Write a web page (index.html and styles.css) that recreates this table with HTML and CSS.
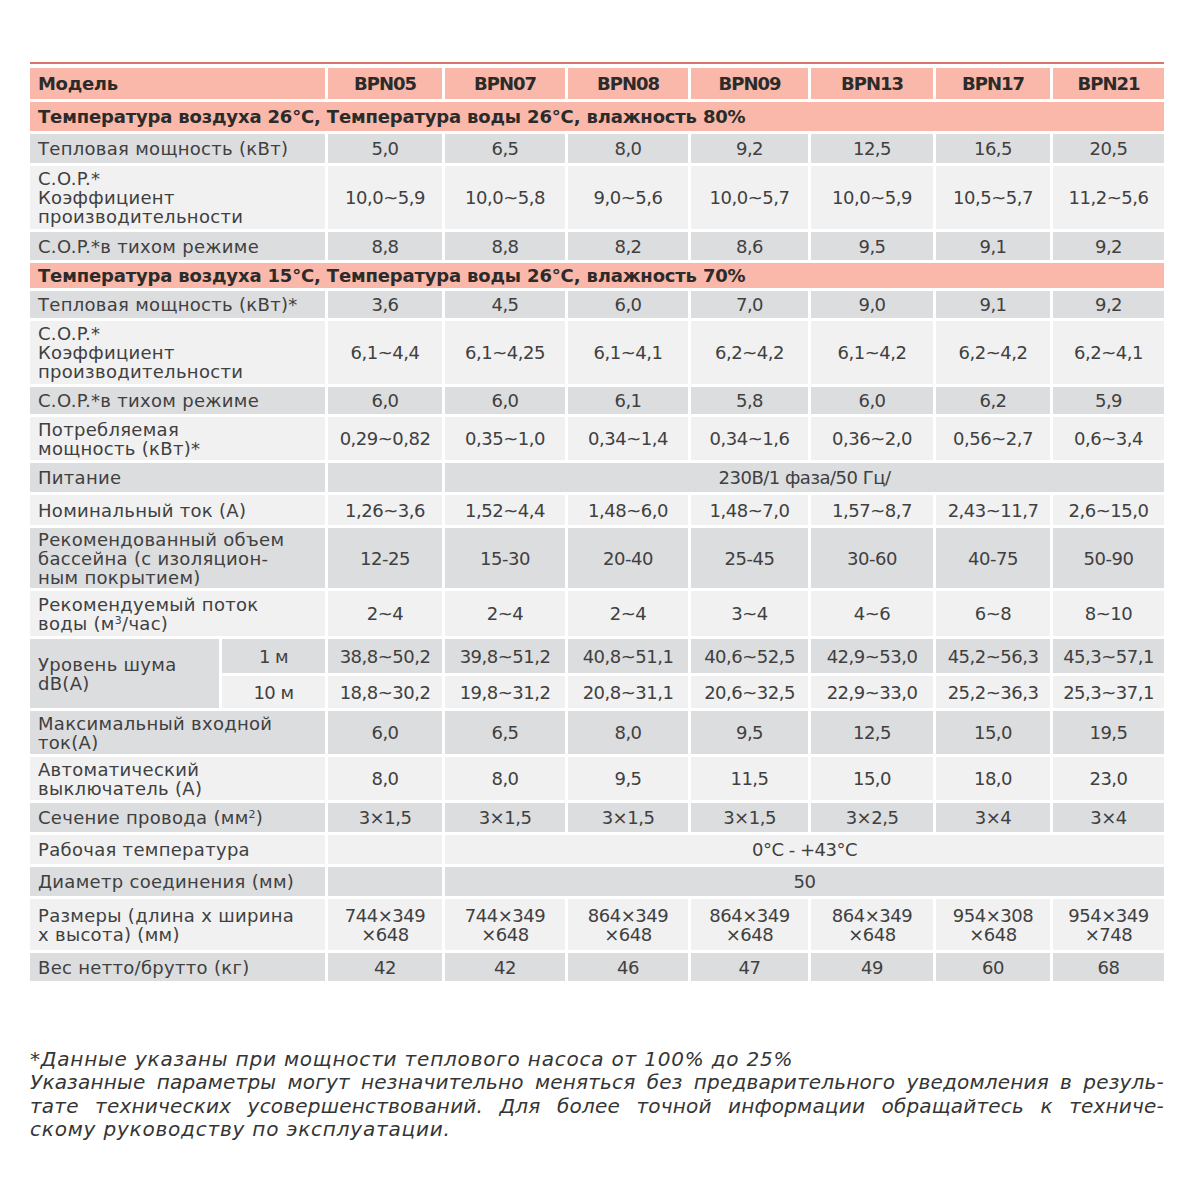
FILE: index.html
```html
<!DOCTYPE html>
<html lang="ru">
<head>
<meta charset="utf-8">
<title>BPN</title>
<link rel="stylesheet" href="styles.css">
</head>
<body>
<div class="page">
  <div class="topline"></div>
  <table class="spec">
    <colgroup>
      <col class="c-la"><col class="c-lb">
      <col class="c05"><col class="c07"><col class="c08"><col class="c09"><col class="c13"><col class="c17"><col class="c21">
    </colgroup>
    <tr class="head h31">
      <td colspan="2" class="lbl">Модель</td>
      <td>BPN05</td><td>BPN07</td><td>BPN08</td><td>BPN09</td><td>BPN13</td><td>BPN17</td><td>BPN21</td>
    </tr>
    <tr class="sec h29">
      <td colspan="9" class="lbl">Температура воздуха 26°C, Температура воды 26°C, влажность 80%</td>
    </tr>
    <tr class="g h29">
      <td colspan="2" class="lbl">Тепловая мощность (кВт)</td>
      <td>5,0</td><td>6,5</td><td>8,0</td><td>9,2</td><td>12,5</td><td>16,5</td><td>20,5</td>
    </tr>
    <tr class="l h63">
      <td colspan="2" class="lbl">C.O.P.*<br>Коэффициент<br>производительности</td>
      <td>10,0~5,9</td><td>10,0~5,8</td><td>9,0~5,6</td><td>10,0~5,7</td><td>10,0~5,9</td><td>10,5~5,7</td><td>11,2~5,6</td>
    </tr>
    <tr class="g h28">
      <td colspan="2" class="lbl">C.O.P.*в тихом режиме</td>
      <td>8,8</td><td>8,8</td><td>8,2</td><td>8,6</td><td>9,5</td><td>9,1</td><td>9,2</td>
    </tr>
    <tr class="sec h25">
      <td colspan="9" class="lbl">Температура воздуха 15°C, Температура воды 26°C, влажность 70%</td>
    </tr>
    <tr class="g h27">
      <td colspan="2" class="lbl">Тепловая мощность (кВт)*</td>
      <td>3,6</td><td>4,5</td><td>6,0</td><td>7,0</td><td>9,0</td><td>9,1</td><td>9,2</td>
    </tr>
    <tr class="l h63">
      <td colspan="2" class="lbl">C.O.P.*<br>Коэффициент<br>производительности</td>
      <td>6,1~4,4</td><td>6,1~4,25</td><td>6,1~4,1</td><td>6,2~4,2</td><td>6,1~4,2</td><td>6,2~4,2</td><td>6,2~4,1</td>
    </tr>
    <tr class="g h27">
      <td colspan="2" class="lbl">C.O.P.*в тихом режиме</td>
      <td>6,0</td><td>6,0</td><td>6,1</td><td>5,8</td><td>6,0</td><td>6,2</td><td>5,9</td>
    </tr>
    <tr class="l h43">
      <td colspan="2" class="lbl">Потребляемая<br>мощность (кВт)*</td>
      <td>0,29~0,82</td><td>0,35~1,0</td><td>0,34~1,4</td><td>0,34~1,6</td><td>0,36~2,0</td><td>0,56~2,7</td><td>0,6~3,4</td>
    </tr>
    <tr class="g h29">
      <td colspan="2" class="lbl">Питание</td>
      <td></td><td colspan="6">230В/1 фаза/50 Гц/</td>
    </tr>
    <tr class="l h30">
      <td colspan="2" class="lbl">Номинальный ток (А)</td>
      <td>1,26~3,6</td><td>1,52~4,4</td><td>1,48~6,0</td><td>1,48~7,0</td><td>1,57~8,7</td><td>2,43~11,7</td><td>2,6~15,0</td>
    </tr>
    <tr class="g h60">
      <td colspan="2" class="lbl">Рекомендованный объем<br>бассейна (с изоляцион-<br>ным покрытием)</td>
      <td>12-25</td><td>15-30</td><td>20-40</td><td>25-45</td><td>30-60</td><td>40-75</td><td>50-90</td>
    </tr>
    <tr class="l h45">
      <td colspan="2" class="lbl">Рекомендуемый поток<br>воды (м<sup>3</sup>/час)</td>
      <td>2~4</td><td>2~4</td><td>2~4</td><td>3~4</td><td>4~6</td><td>6~8</td><td>8~10</td>
    </tr>
    <tr class="g h34">
      <td rowspan="2" class="lbl noise">Уровень шума<br>dB(A)</td>
      <td>1 м</td>
      <td>38,8~50,2</td><td>39,8~51,2</td><td>40,8~51,1</td><td>40,6~52,5</td><td>42,9~53,0</td><td>45,2~56,3</td><td>45,3~57,1</td>
    </tr>
    <tr class="l h32">
      <td>10 м</td>
      <td>18,8~30,2</td><td>19,8~31,2</td><td>20,8~31,1</td><td>20,6~32,5</td><td>22,9~33,0</td><td>25,2~36,3</td><td>25,3~37,1</td>
    </tr>
    <tr class="g h43">
      <td colspan="2" class="lbl">Максимальный входной<br>ток(А)</td>
      <td>6,0</td><td>6,5</td><td>8,0</td><td>9,5</td><td>12,5</td><td>15,0</td><td>19,5</td>
    </tr>
    <tr class="l h43">
      <td colspan="2" class="lbl">Автоматический<br>выключатель (А)</td>
      <td>8,0</td><td>8,0</td><td>9,5</td><td>11,5</td><td>15,0</td><td>18,0</td><td>23,0</td>
    </tr>
    <tr class="g h29">
      <td colspan="2" class="lbl">Сечение провода (мм<sup>2</sup>)</td>
      <td>3×1,5</td><td>3×1,5</td><td>3×1,5</td><td>3×1,5</td><td>3×2,5</td><td>3×4</td><td>3×4</td>
    </tr>
    <tr class="l h29">
      <td colspan="2" class="lbl">Рабочая температура</td>
      <td></td><td colspan="6">0°C - +43°C</td>
    </tr>
    <tr class="g h29">
      <td colspan="2" class="lbl">Диаметр соединения (мм)</td>
      <td></td><td colspan="6">50</td>
    </tr>
    <tr class="l h51">
      <td colspan="2" class="lbl">Размеры (длина х ширина<br>х высота) (мм)</td>
      <td>744×349<br>×648</td><td>744×349<br>×648</td><td>864×349<br>×648</td><td>864×349<br>×648</td><td>864×349<br>×648</td><td>954×308<br>×648</td><td>954×349<br>×748</td>
    </tr>
    <tr class="g h28">
      <td colspan="2" class="lbl">Вес нетто/брутто (кг)</td>
      <td>42</td><td>42</td><td>46</td><td>47</td><td>49</td><td>60</td><td>68</td>
    </tr>
  </table>

  <div class="note">
    <span class="ln">*Данные указаны при мощности теплового насоса от 100% до 25%</span>
    <span class="ln just">Указанные параметры могут незначительно меняться без предварительного уведомления в резуль-</span>
    <span class="ln just">тате технических усовершенствований. Для более точной информации обращайтесь к техниче-</span>
    <span class="ln">скому руководству по эксплуатации.</span>
  </div>
</div>
</body>
</html>
```

FILE: styles.css
```css
html, body {
  margin: 0;
  padding: 0;
  background: #ffffff;
}

.page {
  width: 1134px;
  margin-left: 30px;
  padding-top: 62px;
  font-family: "DejaVu Sans", "Liberation Sans", sans-serif;
  color: #404040;
}

.topline {
  height: 2px;
  background: #d8756c;
  margin-bottom: 1px;
}

.spec {
  border-collapse: separate;
  border-spacing: 3px;
  table-layout: fixed;
  width: 1140px;
  margin: 0 -3px;
  font-size: 18px;
  line-height: 19px;
}

.c-la { width: 189px; }
.c-lb { width: 103px; }
.c05 { width: 114px; }
.c07 { width: 120px; }
.c08 { width: 120px; }
.c09 { width: 117px; }
.c13 { width: 122px; }
.c17 { width: 114px; }
.c21 { width: 111px; }

.spec td {
  padding: 0;
  text-align: center;
  vertical-align: middle;
  white-space: nowrap;
  letter-spacing: -0.5px;
}

.spec td.lbl {
  text-align: left;
  padding-left: 8px;
  letter-spacing: 0.3px;
}

.g td { background: #dcdddf; }
.l td { background: #f1f1f2; }

.head td {
  background: #f9b8a9;
  font-weight: bold;
  color: #2b2b2b;
  letter-spacing: -1px;
}

.head td.lbl {
  letter-spacing: -0.3px;
}

.sec td,
.sec td.lbl {
  background: #f9b8a9;
  font-weight: bold;
  color: #2b2b2b;
  letter-spacing: -0.17px;
}

.spec sup {
  font-size: 11px;
  line-height: 0;
  vertical-align: 6px;
}

.h25 td { height: 25px; }
.h27 td { height: 27px; }
.h28 td { height: 28px; }
.h29 td { height: 29px; }
.h30 td { height: 30px; }
.h31 td { height: 31px; }
.h32 td { height: 32px; }
.h34 td { height: 34px; }
.h43 td { height: 43px; }
.h45 td { height: 45px; }
.h51 td { height: 51px; }
.h60 td { height: 60px; }
.h63 td { height: 63px; }

.note {
  margin-top: 64px;
  font-style: italic;
  font-size: 20px;
  line-height: 23.3px;
  letter-spacing: 0.8px;
  color: #353535;
}

.ln {
  display: block;
  white-space: nowrap;
}

.ln.just {
  letter-spacing: 0.2px;
  text-align: justify;
  text-align-last: justify;
}
```
